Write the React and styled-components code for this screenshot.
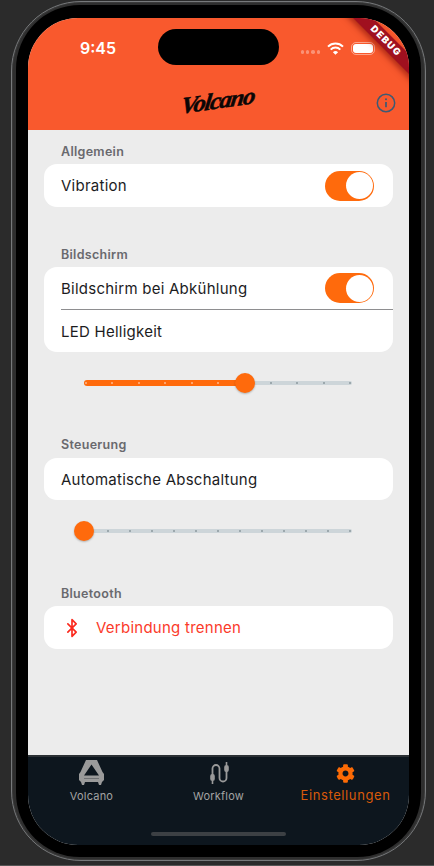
import React from "react";
import styled, { createGlobalStyle } from "styled-components";
import { Bluetooth } from "lucide-react";
import { FaCog } from "react-icons/fa";

const Global = createGlobalStyle`
  html, body { margin: 0; padding: 0; background: #2a2a2a; }
  * { box-sizing: border-box; }
  body { font-family: Inter, "Noto Sans", "Liberation Sans", sans-serif; }
`;

const Page = styled.div`
  width: 434px;
  height: 866px;
  background: #2b2b2b;
  padding: 1px 8px 4px 11px;
  overflow: hidden;
  border-bottom: 1px solid #555;
`;
const Device = styled.div`
  height: 100%;
  border-radius: 70px;
  border: 1px solid #77797b;
  background: #2e2e2e;
  padding: 3px 4px;
  box-shadow: inset 0 0 0 1px #3a3a3a;
`;
const Bezel = styled.div`
  height: 100%;
  background: #000;
  border-radius: 64px;
  padding: 13px 12px 12px 12px;
`;
const Screen = styled.div`
  position: relative;
  height: 100%;
  border-radius: 50px;
  overflow: hidden;
  display: flex;
  flex-direction: column;
  background: #ececec;
`;
const Header = styled.header`
  height: 112px;
  flex: none;
  background: #f9592d;
  display: flex;
  flex-direction: column;
`;
const StatusBar = styled.div`
  height: 58px;
  flex: none;
  padding: 20px 34px 0 52px;
  display: flex;
  justify-content: space-between;
  color: #fff;
`;
const Time = styled.span`
  font-size: 16px;
  font-weight: 600;
  line-height: 20px;
`;
const Island = styled.div`
  position: absolute;
  left: 130px;
  top: 11px;
  width: 121px;
  height: 36px;
  border-radius: 18px;
  background: #000;
`;
const StatusIcons = styled.div`
  display: flex;
  align-items: center;
  height: 14px;
  margin-top: 3px;
  gap: 7px;
`;
const Dots = styled.div`
  display: flex;
  gap: 1.8px;
  margin: 8px 0 0;
`;
const Dot = styled.i`
  width: 3.5px;
  height: 3.5px;
  border-radius: 50%;
  background: rgba(255, 255, 255, 0.35);
`;
const Battery = styled.div`
  width: 24px;
  height: 13px;
  border-radius: 5px;
  border: 1.5px solid rgba(255, 255, 255, 0.45);
  padding: 1px;
  display: flex;
  &::after {
    content: "";
    flex: 1;
    background: #fff;
    border-radius: 3px;
  }
`;
const Banner = styled.div`
  position: absolute;
  top: 16px;
  right: -36px;
  width: 118px;
  height: 14px;
  background: #a0101f;
  color: #fff;
  transform: rotate(45deg);
  box-shadow: 0 3px 6px rgba(110, 0, 0, 0.55);
  font-size: 9.5px;
  font-weight: 900;
  line-height: 14px;
  letter-spacing: 1.2px;
  text-align: center;
`;
const NavBar = styled.div`
  flex: 1;
  padding: 0 13px 0 0;
  display: grid;
  grid-template-columns: 1fr auto 1fr;
  align-items: center;
`;
const Logo = styled.span`
  grid-column: 2;
  font-family: "Liberation Serif", serif;
  font-style: italic;
  font-weight: 700;
  font-size: 25px;
  letter-spacing: -1.4px;
  color: #0b0606;
  -webkit-text-stroke: 0.5px #0b0606;
  transform: rotate(-8deg) skewX(-16deg) scaleY(0.92);
  margin-top: -4px;
  margin-left: 12px;
`;
const InfoButton = styled.div`
  grid-column: 3;
  justify-self: end;
  display: flex;
  margin-top: -1px;
`;
const Content = styled.main`
  flex: 1;
  min-height: 0;
  padding: 13px 16px 0 16px;
  display: flex;
  flex-direction: column;
`;
const SectionLabel = styled.div`
  height: 16px;
  margin: ${(p) => p.$top}px 0 ${(p) => p.$gap ?? 5}px 17px;
  font-size: 12.5px;
  line-height: 18px;
  font-weight: 600;
  color: #69696e;
  letter-spacing: 0.3px;
`;
const Card = styled.section`
  background: #fff;
  border-radius: 13px;
  display: flex;
  flex-direction: column;
  overflow: hidden;
`;
const Row = styled.div`
  height: ${(p) => p.$h || 42}px;
  padding: 0 19px 0 17px;
  display: flex;
  align-items: center;
  justify-content: space-between;
  font-size: 15px;
  letter-spacing: 0.25px;
  color: #1c1c1e;
`;
const Divider = styled.div`
  height: 1px;
  margin-left: 17px;
  background: #8e8e90;
`;
const DangerRow = styled(Row)`
  justify-content: flex-start;
  gap: 14px;
  padding-left: 18px;
  color: #fb3a2a;
`;
const Switch = styled.div`
  width: 49px;
  height: 30px;
  border-radius: 15px;
  background: #ff6a0c;
  padding: 1.5px;
  display: flex;
  justify-content: flex-end;
  &::after {
    content: "";
    width: 27px;
    height: 27px;
    border-radius: 50%;
    background: #fff;
  }
`;
const SliderArea = styled.div`
  height: 62px;
  padding: 0 41px 0 40px;
  display: flex;
  align-items: center;
`;
const Track = styled.div`
  position: relative;
  flex: 1;
  height: 4px;
  border-radius: 2px;
  background: #cdd5d9;
  display: flex;
  align-items: center;
  justify-content: space-between;
  padding: 0 1px;
`;
const Fill = styled.div`
  position: absolute;
  left: 0;
  top: -1px;
  bottom: -1px;
  border-radius: 3px;
  background: #ff6a0c;
`;
const Tick = styled.i`
  position: relative;
  width: 2px;
  height: 2px;
  border-radius: 50%;
  background: ${(p) => (p.$on ? "#ffb98c" : "#8b989e")};
`;
const Thumb = styled.div`
  position: absolute;
  top: 50%;
  width: 20px;
  height: 20px;
  margin: -10px 0 0 -10px;
  border-radius: 50%;
  background: #ff6a0c;
  box-shadow: 0 1px 2px rgba(0, 0, 0, 0.25);
`;
const TabBar = styled.nav`
  height: 90px;
  flex: none;
  background: #0d161e;
  border-top: 2px solid #2b3034;
  display: grid;
  grid-template-columns: repeat(3, 1fr);
  padding: 3px 0 0;
`;
const Tab = styled.div`
  display: flex;
  flex-direction: column;
  align-items: center;
  height: 50px;
`;
const TabIcon = styled.div`
  height: 26px;
  display: flex;
  align-items: center;
  justify-content: center;
`;
const TabLabel = styled.span`
  margin-top: -1px;
  font-size: ${(p) => (p.$active ? 13 : 11)}px;
  line-height: ${(p) => (p.$active ? 20 : 22)}px;
  letter-spacing: ${(p) => (p.$active ? 0.6 : 0.2)}px;
  color: ${(p) => (p.$active ? "#d95a0a" : "#a3a3a3")};
`;
const HomeBar = styled.div`
  position: absolute;
  left: 123px;
  bottom: 9px;
  width: 135px;
  height: 4px;
  border-radius: 2px;
  background: #3c4044;
`;

const Wifi = () => (
  <svg width="17" height="13" viewBox="0 0 17 13" fill="none" stroke="#fff" strokeWidth="2">
    <path d="M1 4.6a10.6 10.6 0 0 1 15 0" />
    <path d="M3.7 7.6a6.8 6.8 0 0 1 9.6 0" />
    <path d="M8.5 12.8 5.9 10.2a3.7 3.7 0 0 1 5.2 0Z" fill="#fff" stroke="none" />
  </svg>
);

const InfoIcon = () => (
  <svg width="20" height="20" viewBox="0 0 20 20" fill="none" stroke="#3d5a74" strokeWidth="1.5">
    <circle cx="10" cy="10" r="8.7" />
    <path d="M10 9v5.2" strokeWidth="1.7" />
    <circle cx="10" cy="6.2" r="1" fill="#3d5a74" stroke="none" />
  </svg>
);

const VolcanoIcon = () => (
  <svg width="25" height="26" viewBox="0 0 25 26" fill="#9a9a9a">
    <path
      fillRule="evenodd"
      d="M7 0h11l5.5 12 1.5 2v6l-2 2-1 3h-2l-1-3H6l-1 3H3l-1-3-2-2v-6l1.5-2ZM12.5 4.5 5 15.5h15Z"
    />
    <path d="M5 18h15v1H5Z" fill="#6f7173" />
  </svg>
);

const WorkflowIcon = () => (
  <svg width="20" height="22" viewBox="0 0 20 22" fill="none" stroke="#9a9a9a" strokeWidth="1.8">
    <path d="M3.5 14V6.5a3.5 3.5 0 0 1 7 0V16a3.5 3.5 0 0 0 7 0V7" />
    <rect x="1.2" y="12" width="4.6" height="7" rx="2" fill="#9a9a9a" stroke="none" />
    <rect x="15.2" y="3" width="4.6" height="7" rx="2" fill="#9a9a9a" stroke="none" />
    <path d="M17.5 0v3" strokeWidth="1.6" />
    <path d="M3.5 19v3" strokeWidth="1.6" />
  </svg>
);

const Slider = ({ value, divisions }) => (
  <SliderArea>
    <Track>
      <Fill style={{ width: `${value * 100}%` }} />
      {Array.from({ length: divisions + 1 }, (_, i) => (
        <Tick key={i} $on={i / divisions < value} />
      ))}
      <Thumb style={{ left: `${value * 100}%` }} />
    </Track>
  </SliderArea>
);

export default function App() {
  return (
    <Page>
      <Global />
      <Device>
        <Bezel>
          <Screen>
            <Header>
              <StatusBar>
                <Time>9:45</Time>
                <StatusIcons>
                  <Dots>
                    <Dot />
                    <Dot />
                    <Dot />
                    <Dot />
                  </Dots>
                  <Wifi />
                  <Battery />
                </StatusIcons>
              </StatusBar>
              <NavBar>
                <Logo>Volcano</Logo>
                <InfoButton>
                  <InfoIcon />
                </InfoButton>
              </NavBar>
            </Header>
            <Island />
            <Banner>DEBUG</Banner>
            <Content>
              <SectionLabel $top={0}>Allgemein</SectionLabel>
              <Card>
                <Row $h={43}>
                  Vibration
                  <Switch />
                </Row>
              </Card>
              <SectionLabel $top={39}>Bildschirm</SectionLabel>
              <Card>
                <Row>
                  Bildschirm bei Abkühlung
                  <Switch />
                </Row>
                <Divider />
                <Row>LED Helligkeit</Row>
              </Card>
              <Slider value={0.6} divisions={10} />
              <SectionLabel $top={22} $gap={6}>Steuerung</SectionLabel>
              <Card>
                <Row>Automatische Abschaltung</Row>
              </Card>
              <Slider value={0} divisions={12} />
              <SectionLabel $top={23}>Bluetooth</SectionLabel>
              <Card>
                <DangerRow $h={43}>
                  <Bluetooth size={20} strokeWidth={2} color="#fb2a1e" />
                  Verbindung trennen
                </DangerRow>
              </Card>
            </Content>
            <TabBar>
              <Tab>
                <TabIcon>
                  <VolcanoIcon />
                </TabIcon>
                <TabLabel>Volcano</TabLabel>
              </Tab>
              <Tab>
                <TabIcon>
                  <WorkflowIcon />
                </TabIcon>
                <TabLabel>Workflow</TabLabel>
              </Tab>
              <Tab>
                <TabIcon>
                  <FaCog size={19} color="#fb6a05" />
                </TabIcon>
                <TabLabel $active>Einstellungen</TabLabel>
              </Tab>
            </TabBar>
            <HomeBar />
          </Screen>
        </Bezel>
      </Device>
    </Page>
  );
}
